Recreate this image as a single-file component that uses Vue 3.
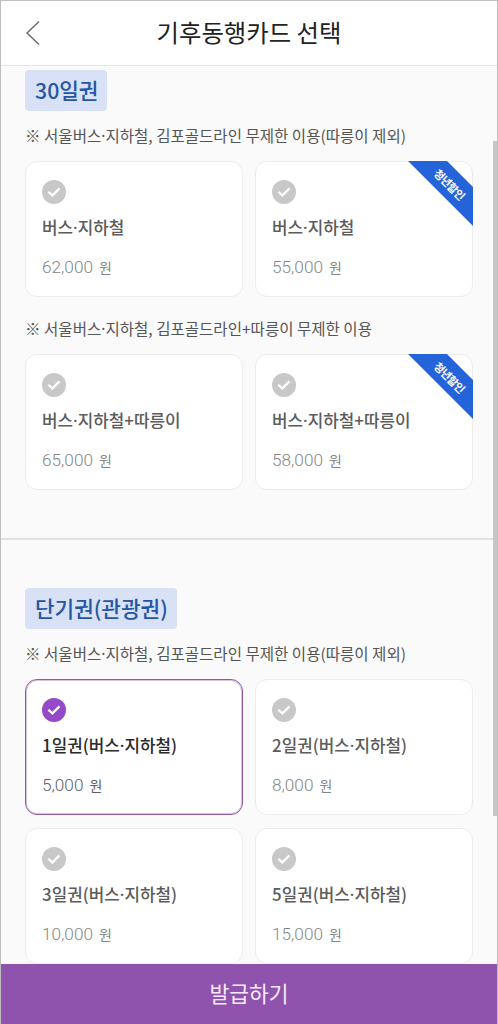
<template>
  <div class="screen">
    <header class="header">
      <button class="back" aria-label="뒤로">
        <svg width="14" height="26" viewBox="0 0 14 26"><path d="M13 1.5 1 13 13 24.5" /></svg>
      </button>
      <h1>기후동행카드 선택</h1>
    </header>

    <main class="content">
      <section v-for="section in sections" :key="section.title" class="section">
        <h2 class="badge">{{ section.title }}</h2>
        <div v-for="group in section.groups" :key="group.note" class="group">
          <p class="note"><DotText :text="group.note" /></p>
          <div class="grid">
            <div
              v-for="item in group.items"
              :key="item.id"
              class="card"
              :class="{ selected: item.id === selectedId }"
              @click="selectedId = item.id"
            >
              <svg class="check" width="24" height="24" viewBox="0 0 24 24">
                <circle cx="12" cy="12" r="12" />
                <path d="M6.3 11.7 10.4 15.4 17.5 8.4" />
              </svg>
              <strong class="name"><DotText :text="item.name" /></strong>
              <p class="price"><span class="amount">{{ item.price.toLocaleString('en-US') }}</span><span class="won">원</span></p>
              <div v-if="item.youth" class="ribbon"><span>청년할인</span></div>
            </div>
          </div>
        </div>
      </section>
      <div class="scrollbar"></div>
    </main>

    <button class="submit">발급하기</button>
    <div class="frame"></div>
  </div>
</template>

<script setup>
import { h, ref } from 'vue'

// the Korean font has a wide middle dot, so dots get their own span
const DotText = (props) =>
  h('span', props.text.split(/(·)/).map((part) => (part === '·' ? h('span', { class: 'middot' }, part) : part)))
DotText.props = ['text']

const selectedId = ref('day1')

const sections = [
  {
    title: '30일권',
    groups: [
      {
        note: '※ 서울버스·지하철, 김포골드라인 무제한 이용(따릉이 제외)',
        items: [
          { id: 'month', name: '버스·지하철', price: 62000 },
          { id: 'month-youth', name: '버스·지하철', price: 55000, youth: true },
        ],
      },
      {
        note: '※ 서울버스·지하철, 김포골드라인+따릉이 무제한 이용',
        items: [
          { id: 'bike', name: '버스·지하철+따릉이', price: 65000 },
          { id: 'bike-youth', name: '버스·지하철+따릉이', price: 58000, youth: true },
        ],
      },
    ],
  },
  {
    title: '단기권(관광권)',
    groups: [
      {
        note: '※ 서울버스·지하철, 김포골드라인 무제한 이용(따릉이 제외)',
        items: [
          { id: 'day1', name: '1일권(버스·지하철)', price: 5000 },
          { id: 'day2', name: '2일권(버스·지하철)', price: 8000 },
          { id: 'day3', name: '3일권(버스·지하철)', price: 10000 },
          { id: 'day5', name: '5일권(버스·지하철)', price: 15000 },
        ],
      },
    ],
  },
]
</script>

<style>
body { margin: 0; }
</style>

<style scoped>
.screen {
  position: relative; display: flex; flex-direction: column;
  height: 1024px; overflow: hidden; background: #fafafa;
  font-family: "Noto Sans CJK KR", sans-serif;
}
.screen :deep(.middot) { font-family: "Noto Sans", sans-serif; line-height: 1; }
h1, h2, p { margin: 0; }
button { padding: 0; border: 0; background: none; font-family: inherit; cursor: pointer; }

.header {
  display: grid; grid-template-columns: 40px 1fr 40px; align-items: center;
  flex: none; box-sizing: border-box; height: 66px;
  background: #fff; border-bottom: 1px solid #e4e4e4;
}
.back { display: flex; justify-content: flex-end; }
.back svg { fill: none; stroke: #666; stroke-width: 1.4; }
h1 { padding-bottom: 2px; font-size: 24.4px; font-weight: 400; line-height: 36px; text-align: center; color: #222; }

.content { position: relative; flex: 1; min-height: 0; overflow: hidden; }
.section { padding: 4px 25px 48px; }
.section + .section { padding-top: 48px; border-top: 2px solid #e2e2e3; }
.badge {
  width: fit-content; box-sizing: border-box; height: 41px; padding: 0 9px 0 10px; border-radius: 4px;
  background: #d9e1f6; color: #2456a4;
  font-size: 21.3px; font-weight: 500; line-height: 39px;
}
.note {
  height: 50px; font-size: 15.55px; line-height: 48px; color: #555; white-space: nowrap;
}
.group + .group { padding-top: 7px; }
.grid { display: grid; grid-template-columns: 1fr 1fr; gap: 13px 12px; }
.card {
  position: relative; box-sizing: border-box; height: 136px; padding: 18px 16px 0;
  display: flex; flex-direction: column; align-items: flex-start;
  border: 1px solid #ececec; border-radius: 12px; background: #fff; cursor: pointer;
}
.check { flex: none; fill: #c8c8c8; }
.check path { fill: none; stroke: #fff; stroke-width: 2.2; }
.name { margin-top: 10px; font-size: 16.9px; font-weight: 500; line-height: 26px; color: #5c5c5c; white-space: nowrap; }
.price { display: flex; align-items: baseline; gap: 6px; margin-top: 14px; line-height: 26px; color: #868686; }
.amount { font-family: Roboto, sans-serif; font-size: 17.2px; font-weight: 300; }
.won { font-size: 14px; }

.selected { border-color: #8d5aa5; box-shadow: inset 0 0 0 1px rgba(141, 90, 165, 0.35); }
.selected .check { fill: #9548c8; }
.selected .name { color: #2b2b2b; }
.selected .price { color: #5f5f5f; }

/* diagonal band across the card's top right corner */
.ribbon {
  position: absolute; top: -1px; right: -1px; width: 65px; height: 65px;
  display: flex; align-items: center; justify-content: center;
  background: #2563d9; clip-path: polygon(0 0, 39px 0, 100% 26px, 100% 100%);
}
.ribbon span {
  position: relative; left: 9px; top: -10px; transform: rotate(45deg);
  font-size: 11px; font-weight: 700; line-height: 14px; letter-spacing: -0.7px; color: #fff; white-space: nowrap;
}

.scrollbar { position: absolute; top: 75px; right: 0; width: 5px; height: 675px; background: #c6c6c7; }
.submit { flex: none; height: 60px; padding-bottom: 2px; background: #8f53ad; color: #fbeaff; font-size: 21.5px; line-height: 58px; }
.frame { position: absolute; inset: 0; border: 1px solid #bdbdbd; border-bottom: 0; pointer-events: none; }
</style>
